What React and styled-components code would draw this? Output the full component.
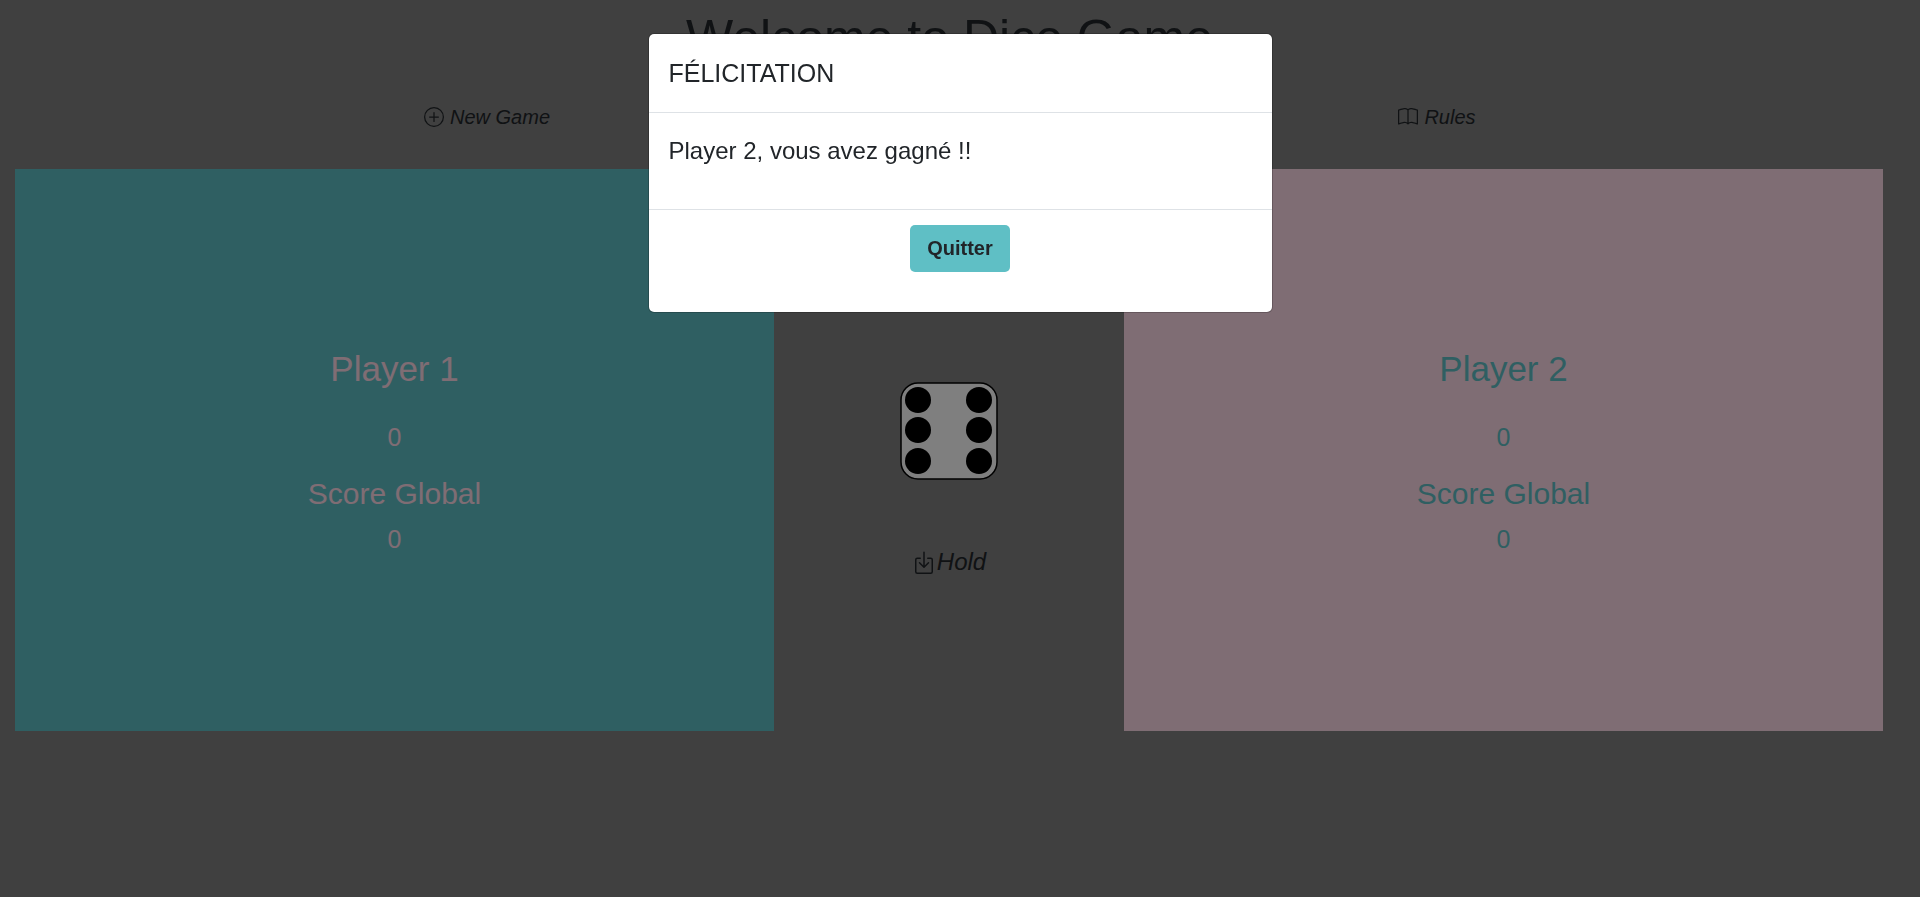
import React from "react";
import styled, { createGlobalStyle } from "styled-components";
import { BsPlusCircle, BsBook, BsBoxArrowInDown } from "react-icons/bs";

const TEAL = "#5fbfc5";
const PINK = "#ffdae8";
const INK = "#212529";

const GlobalStyle = createGlobalStyle`
  *, *::before, *::after { box-sizing: border-box; }
  html { background: #808080; }
  body {
    margin: 0;
    background: #808080;
    color: ${INK};
    font-family: "Liberation Sans", Arial, sans-serif;
    font-size: 20px;
    line-height: 30px;
  }
  h1, h2, h3, p { margin: 0; font-weight: 400; }
  button { font: inherit; color: inherit; cursor: pointer; }
`;

const Page = styled.div`
  min-height: 100vh;
  padding-top: 8px;
`;

const Title = styled.h1`
  padding: 0 36px 0 15px;
  font-size: 50px;
  line-height: 60px;
  text-align: center;
`;

const Toolbar = styled.nav`
  display: grid;
  grid-template-columns: 1fr 1fr;
  justify-items: center;
  padding: 34px 8px 37px 12px;
`;

const GameButton = styled.button`
  display: inline-flex;
  align-items: center;
  gap: ${({ $large }) => ($large ? 1 : 6)}px;
  padding: 0;
  border: 0;
  background: none;
  font-style: italic;
  font-size: ${({ $large }) => ($large ? 24 : 20)}px;
  line-height: 30px;

  svg {
    flex: none;
    width: ${({ $large }) => ($large ? 24 : 20)}px;
    height: ${({ $large }) => ($large ? 24 : 20)}px;
  }
`;

const Board = styled.main`
  display: grid;
  grid-template-columns: 1fr 350px 1fr;
  min-height: 562px;
  margin: 0 37px 0 15px;
`;

const PlayerPanel = styled.section`
  display: flex;
  flex-direction: column;
  align-items: center;
  justify-content: center;
  padding-top: 2px;
  background: ${({ $background }) => $background};
  color: ${({ $color }) => $color};
`;

const PlayerName = styled.h2`
  margin-bottom: 32px;
  font-size: 35px;
  line-height: 42px;
`;

const Score = styled.p`
  font-size: 25px;
  line-height: 30px;
`;

const ScoreLabel = styled.h3`
  margin: 24px 0 12px;
  font-size: 30px;
  line-height: 36px;
`;

const Controls = styled.div`
  display: flex;
  flex-direction: column;
  align-items: center;
  gap: 67px;
  padding-top: 213px;
`;

const DieButton = styled.button`
  display: flex;
  padding: 0;
  border: 0;
  background: none;
`;

const Backdrop = styled.div`
  position: fixed;
  inset: 0;
  padding-top: 33px;
  overflow: auto;
  background: rgba(0, 0, 0, 0.5);
`;

const Dialog = styled.div`
  width: 100%;
  max-width: 625px;
  margin: 0 auto;
  border: 1px solid rgba(0, 0, 0, 0.2);
  border-radius: 6px;
  background: #fff;
  background-clip: padding-box;
`;

const DialogHeader = styled.header`
  padding: 20px;
  border-bottom: 1px solid #dee2e6;
`;

const DialogTitle = styled.h2`
  font-size: 25px;
  line-height: 38px;
`;

const DialogBody = styled.div`
  padding: 20px 20px 40px;
  font-size: 24px;
  line-height: 36px;
`;

const DialogFooter = styled.footer`
  display: flex;
  justify-content: center;
  padding: 15px 20px 40px;
  border-top: 1px solid #dee2e6;
`;

const QuitButton = styled.button`
  padding: 8px 17px;
  border: 0;
  border-radius: 5px;
  background: ${TEAL};
  && { font-weight: 700; line-height: 31px; }
`;

const PIPS = [
  [18, 18], [18, 48], [18, 79],
  [79, 18], [79, 48], [79, 79],
];

function Die() {
  return (
    <svg width="98" height="98" viewBox="0 0 98 98" aria-hidden="true">
      <rect x="1" y="1" width="96" height="96" rx="17" fill="#fff" stroke="#000" strokeWidth="1.5" />
      {PIPS.map(([x, y]) => (
        <circle key={`${x}-${y}`} cx={x} cy={y} r="13" />
      ))}
    </svg>
  );
}

function Player({ name, current, total, background, color }) {
  return (
    <PlayerPanel $background={background} $color={color}>
      <PlayerName>{name}</PlayerName>
      <Score>{current}</Score>
      <ScoreLabel>Score Global</ScoreLabel>
      <Score>{total}</Score>
    </PlayerPanel>
  );
}

export default function App() {
  return (
    <>
      <GlobalStyle />
      <Page>
        <Title>Welcome to Dice Game</Title>
        <Toolbar>
          <GameButton type="button"><BsPlusCircle />New Game</GameButton>
          <GameButton type="button"><BsBook />Rules</GameButton>
        </Toolbar>
        <Board>
          <Player name="Player 1" current={0} total={0} background={TEAL} color={PINK} />
          <Controls>
            <DieButton type="button" aria-label="6"><Die /></DieButton>
            <GameButton type="button" $large><BsBoxArrowInDown />Hold</GameButton>
          </Controls>
          <Player name="Player 2" current={0} total={0} background={PINK} color={TEAL} />
        </Board>
      </Page>
      <Backdrop>
        <Dialog role="dialog" aria-modal="true" aria-labelledby="dialog-title">
          <DialogHeader>
            <DialogTitle id="dialog-title">FÉLICITATION</DialogTitle>
          </DialogHeader>
          <DialogBody>
            <p>Player 2, vous avez gagné !!</p>
          </DialogBody>
          <DialogFooter>
            <QuitButton type="button">Quitter</QuitButton>
          </DialogFooter>
        </Dialog>
      </Backdrop>
    </>
  );
}
